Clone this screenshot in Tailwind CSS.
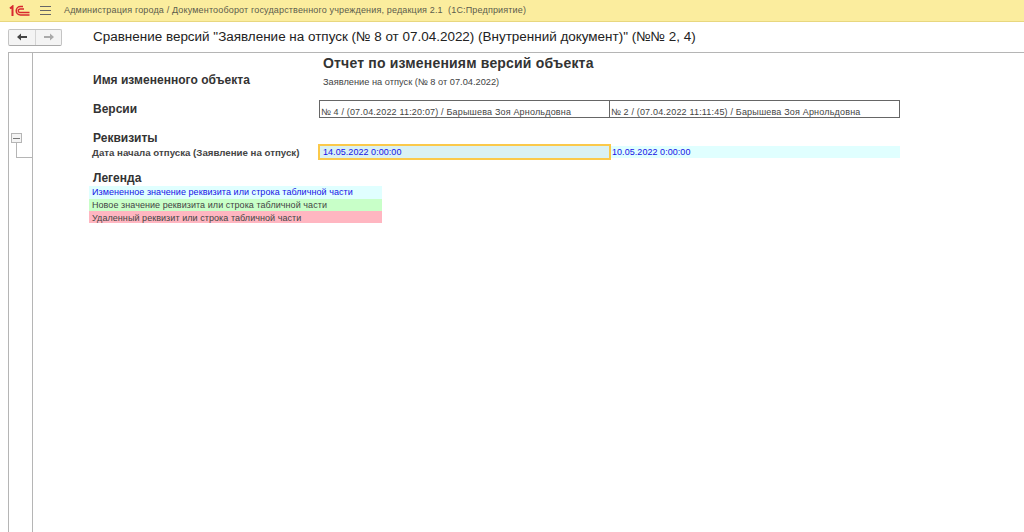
<!DOCTYPE html>
<html lang="ru">
<head>
<meta charset="utf-8">
<script src="https://cdn.jsdelivr.net/npm/@tailwindcss/browser@4"></script>
</head>
<body class="w-[1024px] h-[532px] overflow-hidden bg-white font-['Liberation_Sans',Arial,sans-serif] text-[#333]">
<header class="h-[22px] bg-[#fbed9e] border-b border-[#e8d77f] flex items-center">
  <svg class="ml-[9px] w-[21px] h-[12px]" viewBox="0 0 21 12" fill="none" stroke="#d8292f">
    <path d="M1 3.5 L3.5 1.5 V11" stroke-width="2"/>
    <path d="M20.5 10 H11.5 A4.2 4.2 0 1 1 11.5 1.5 H14" stroke-width="1.6"/>
    <path d="M20.5 7.5 H11.5 A1.8 1.8 0 1 1 11.5 4 H15" stroke-width="1.4"/>
  </svg>
  <svg class="ml-[10px] w-[11px] h-[9px]" viewBox="0 0 11 9" stroke="#666" stroke-width="1"><path d="M0 .5H11M0 4.5H11M0 8.5H11"/></svg>
  <span class="ml-[13px] text-[9px] leading-none text-[#5c5c4c] whitespace-pre tracking-[0.16px]">Администрация города / Документооборот государственного учреждения, редакция 2.1  (1С:Предприятие)</span>
</header>
<div class="h-[30px] flex items-center">
  <div class="ml-[8px] w-[54px] h-[17px] flex rounded-[2px] border border-[#c4c4c4] border-b-[#aaa] bg-[#f4f4f4]">
    <div class="w-[27px] border-r border-[#d4d4d4] flex items-center justify-center">
      <svg class="w-[10px] h-[8px]" viewBox="0 0 10 8" fill="#444"><path d="M0 4 4 .5V3H10V5H4V7.5Z"/></svg>
    </div>
    <div class="flex-1 flex items-center justify-center">
      <svg class="w-[10px] h-[8px]" viewBox="0 0 10 8" fill="#aaa"><path d="M10 4 6 .5V3H0V5H6V7.5Z"/></svg>
    </div>
  </div>
  <h1 class="ml-[31px] text-[13.46px] leading-none font-normal text-[#222] whitespace-nowrap">Сравнение версий "Заявление на отпуск (№ 8 от 07.04.2022) (Внутренний документ)" (№№ 2, 4)</h1>
</div>
<main class="ml-[8px] h-[480px] border-t border-l border-[#b5b5b5] flex">
  <div class="w-[24px] shrink-0 border-r border-[#b5b5b5] relative">
    <div class="absolute left-[2px] top-[80px] w-[11px] h-[10px] border border-[#b5b5b5] bg-[#f4f4f4] flex items-center justify-center">
      <div class="w-[7px] h-px bg-[#777]"></div>
    </div>
    <div class="absolute left-[7px] top-[90px] w-[16px] h-[15px] border-l border-b border-[#b5b5b5]"></div>
  </div>
  <div class="pl-[56px] w-[900px]">
    <div class="h-[18px] pl-[234px] flex items-center text-[14px] font-bold text-[#333] whitespace-nowrap tracking-[0.18px] mt-px">Отчет по изменениям версий объекта</div>
    <div class="flex h-[17px] items-center -mt-[1px]">
      <div class="w-[229px] pl-[4px] text-[12px] font-bold tracking-[0.03px]">Имя измененного объекта</div>
      <div class="pl-[5px] text-[9.25px] text-[#444] mt-[7px] whitespace-nowrap">Заявление на отпуск (№ 8 от 07.04.2022)</div>
    </div>
    <div class="flex mt-[12px] h-[18px]">
      <div class="w-[230px] pl-[4px] text-[12px] font-bold leading-[18px]">Версии</div>
      <div class="flex h-[18px] border border-[#666] w-[581px] text-[9px] text-[#444] tracking-[0.18px] whitespace-nowrap">
        <div class="w-[290px] border-r border-[#666] pl-[1px] pt-[6px] leading-[11px]">№ 4 / (07.04.2022 11:20:07) / Барышева Зоя Арнольдовна</div>
        <div class="pl-[1px] pt-[6px] leading-[11px]">№ 2 / (07.04.2022 11:11:45) / Барышева Зоя Арнольдовна</div>
      </div>
    </div>
    <div class="mt-[12px] pl-[4px] h-[14px] text-[12px] font-bold leading-[17px]">Реквизиты</div>
    <div class="flex h-[16px] items-center">
      <div class="w-[229px] pl-[3px] mt-[2px] text-[9.7px] font-bold text-[#444] whitespace-nowrap">Дата начала отпуска (Заявление на отпуск)</div>
      <div class="w-[293px] h-[16px] border-2 border-[#fbc94a] bg-[#daf1f3] pl-[3px] text-[9px] leading-[12px] text-[#1414e6] tracking-[0.05px]">14.05.2022 0:00:00</div>
      <div class="w-[289px] h-[12px] bg-[#e0ffff] pl-[1px] text-[9px] leading-[12px] text-[#1414e6] tracking-[0.05px]">10.05.2022 0:00:00</div>
    </div>
    <div class="mt-[12px] pl-[4px] h-[14px] text-[12px] font-bold leading-[12px]">Легенда</div>
    <div class="w-[293px] text-[9px] tracking-[0.06px] whitespace-nowrap">
      <div class="h-[13px] pl-[3px] leading-[13px] bg-[#e0ffff] text-[#1414e6]">Измененное значение реквизита или строка табличной части</div>
      <div class="h-[12px] pl-[3px] leading-[13px] bg-[#c8ffc8] text-[#444]">Новое значение реквизита или строка табличной части</div>
      <div class="h-[12px] pl-[3px] leading-[14px] bg-[#ffb6c1] text-[#444]">Удаленный реквизит или строка табличной части</div>
    </div>
  </div>
</main>
</body>
</html>
